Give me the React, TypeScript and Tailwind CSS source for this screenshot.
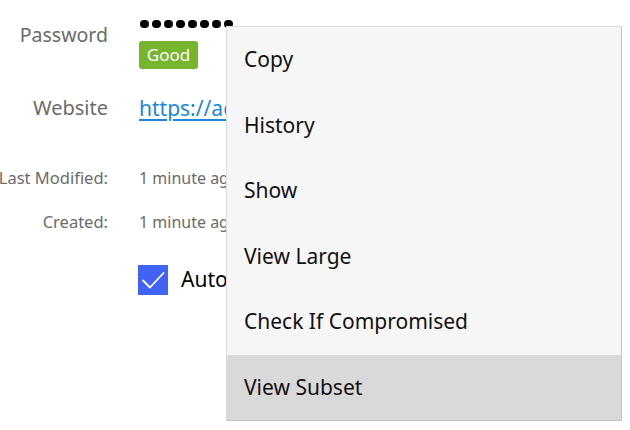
import type { ReactNode } from "react";

const menuItems = [
   "Copy",
   "History",
   "Show",
   "View Large",
   "Check If Compromised",
   "View Subset",
];

// label column is right aligned; long labels spill to the left edge
const Row = ({
   label,
   labelClass,
   className,
   children,
}: {
   label: string;
   labelClass: string;
   className: string;
   children: ReactNode;
}) => (
   <div className={`flex items-start ${className}`}>
      <div className={`flex w-[108px] shrink-0 justify-end whitespace-nowrap text-[#6b6b6b] ${labelClass}`}>
         <span>{label}</span>
      </div>
      <div className="ml-[31px] min-w-0 flex-1">{children}</div>
   </div>
);

export default function App() {
   return (
      <div
         className="relative h-[430px] w-[630px] overflow-hidden bg-white"
         style={{ fontFamily: '"Noto Sans", "Open Sans", sans-serif' }}
      >
         <div className="flex flex-col">
            {/* Password */}
            <Row
               label="Password"
               labelClass="pt-[7px] text-[19.5px] leading-[28px]"
               className="mt-[14px]"
            >
               <div className="flex h-[20px] items-center gap-[3.5px] pl-[1px]">
                  {Array.from({ length: 8 }).map((_, i) => (
                     <span key={i} className="h-[8.5px] w-[8.5px] shrink-0 rounded-full bg-black" />
                  ))}
               </div>
               <div className="mt-[7px] inline-flex h-[28px] w-[59px] items-center justify-center rounded-[3px] bg-[#78b52f] text-[17px] text-white">
                  Good
               </div>
            </Row>

            {/* Website - values are cut where the menu begins */}
            <Row
               label="Website"
               labelClass="text-[20px] leading-[28px]"
               className="mt-[25px]"
            >
               <div className="w-[87px] overflow-hidden whitespace-nowrap text-[21px] leading-[28px] text-[#1a86df] underline underline-offset-[3px]">
                  https://accounts.example.com
               </div>
            </Row>

            {/* Timestamps */}
            <Row
               label="Last Modified:"
               labelClass="text-[16.5px] leading-[24px]"
               className="mt-[44px]"
            >
               <div className="w-[87px] overflow-hidden whitespace-nowrap text-[16px] leading-[24px] text-[#6b6b6b]">
                  1 minute ago
               </div>
            </Row>
            <Row
               label="Created:"
               labelClass="text-[16.5px] leading-[24px]"
               className="mt-[20px]"
            >
               <div className="w-[87px] overflow-hidden whitespace-nowrap text-[16px] leading-[24px] text-[#6b6b6b]">
                  1 minute ago
               </div>
            </Row>

            {/* Auto-type checkbox */}
            <div className="mt-[30px] flex w-[226px] items-center overflow-hidden pl-[138px]">
               <div className="flex h-[30px] w-[30px] shrink-0 items-center justify-center bg-[#4262f5]">
                  <svg width="30" height="30" viewBox="0 0 30 30" fill="none">
                     <polyline
                        points="5,15.5 12,22.5 25.5,8"
                        stroke="white"
                        strokeWidth="1.8"
                        strokeLinecap="round"
                        strokeLinejoin="round"
                     />
                  </svg>
               </div>
               <span className="ml-[13px] whitespace-nowrap text-[21px] text-black">
                  Auto-Type enabled
               </span>
            </div>
         </div>

         {/* Context menu */}
         <div className="absolute left-[226px] top-[26px] w-[396px] border border-[#dcdcdc] border-b-[#bdbdbd] border-r-[#c4c4c4] bg-[#f6f6f6]">
            {menuItems.map((item, i) => (
               <div
                  key={item}
                  className={`flex h-[65.5px] items-center pl-[17px] text-[21px] text-[#111] ${
                     i == menuItems.length - 1 ? "bg-[#d9d9d9]" : ""
                  }`}
               >
                  {item}
               </div>
            ))}
         </div>
      </div>
   );
}
